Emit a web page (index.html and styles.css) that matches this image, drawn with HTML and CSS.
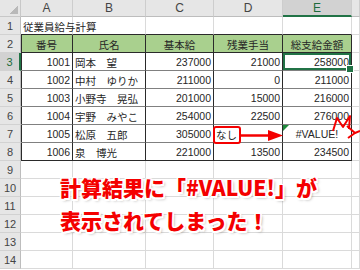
FILE: index.html
```html
<!DOCTYPE html>
<html lang="ja">
<head>
<meta charset="utf-8">
<link rel="stylesheet" href="styles.css">
</head>
<body>
<div class="page">
  <div class="sheet">
    <div class="corner"></div>
    <div class="ch">A</div><div class="ch">B</div><div class="ch">C</div><div class="ch">D</div><div class="ch sel">E</div><div class="ch"></div>

    <div class="rh">1</div>
    <div class="c top title">従業員給与計算</div><div class="c top"></div><div class="c top"></div><div class="c top"></div><div class="c top"></div><div class="c"></div>

    <div class="rh">2</div>
    <div class="c t hd first">番号</div><div class="c t hd">氏名</div><div class="c t hd">基本給</div><div class="c t hd">残業手当</div><div class="c t hd">総支給金額</div><div class="c"></div>

    <div class="rh sel">3</div>
    <div class="c t first num">1001</div><div class="c t txt">岡本　望</div><div class="c t num">237000</div><div class="c t num">21000</div><div class="c t num active">258000</div><div class="c"></div>

    <div class="rh">4</div>
    <div class="c t first num">1002</div><div class="c t txt">中村　ゆりか</div><div class="c t num">211000</div><div class="c t num">0</div><div class="c t num">211000</div><div class="c"></div>

    <div class="rh">5</div>
    <div class="c t first num">1003</div><div class="c t txt">小野寺　晃弘</div><div class="c t num">201000</div><div class="c t num">15000</div><div class="c t num">216000</div><div class="c"></div>

    <div class="rh">6</div>
    <div class="c t first num">1004</div><div class="c t txt">宇野　みやこ</div><div class="c t num">254000</div><div class="c t num">22500</div><div class="c t num">276000</div><div class="c"></div>

    <div class="rh">7</div>
    <div class="c t first num">1005</div><div class="c t txt">松原　五郎</div><div class="c t num">305000</div><div class="c t txt">なし</div><div class="c t err">#VALUE!</div><div class="c"></div>

    <div class="rh">8</div>
    <div class="c t last first num">1006</div><div class="c t last txt">泉　博光</div><div class="c t last num">221000</div><div class="c t last num">13500</div><div class="c t last num">234500</div><div class="c"></div>

    <div class="rh">9</div><div class="c"></div><div class="c"></div><div class="c"></div><div class="c"></div><div class="c"></div><div class="c"></div>
    <div class="rh">10</div><div class="c"></div><div class="c"></div><div class="c"></div><div class="c"></div><div class="c"></div><div class="c"></div>
    <div class="rh">11</div><div class="c"></div><div class="c"></div><div class="c"></div><div class="c"></div><div class="c"></div><div class="c"></div>
    <div class="rh">12</div><div class="c"></div><div class="c"></div><div class="c"></div><div class="c"></div><div class="c"></div><div class="c"></div>
    <div class="rh">13</div><div class="c"></div><div class="c"></div><div class="c"></div><div class="c"></div><div class="c"></div><div class="c"></div>
    <div class="rh">14</div><div class="c"></div><div class="c"></div><div class="c"></div><div class="c"></div><div class="c"></div><div class="c"></div>
  </div>

  <svg class="marks" width="360" height="270" viewBox="0 0 360 270">
    <rect x="214" y="127" width="26" height="16" rx="2" fill="none" stroke="#f40000" stroke-width="2"/>
    <line x1="240" y1="135.5" x2="270" y2="135.5" stroke="#f40000" stroke-width="2.5"/>
    <polygon points="268,130 283,135.5 268,141" fill="#f40000"/>
    <polyline points="333,131 337,118 343,127 350,116 349,129" fill="none" stroke="#f40000" stroke-width="2" stroke-linejoin="round"/>
    <polyline points="347,126 355,133 348,138" fill="none" stroke="#f40000" stroke-width="2" stroke-linejoin="round"/>
    <line x1="355" y1="133" x2="360" y2="131" stroke="#f40000" stroke-width="2"/>
  </svg>

  <div class="callout">計算結果に「#VALUE!」が<br>表示されてしまった！</div>
</div>
</body>
</html>
```

FILE: styles.css
```css
* { box-sizing: border-box; }
html, body { margin: 0; padding: 0; background: #fff; }
.page {
  position: relative;
  width: 360px;
  height: 270px;
  overflow: hidden;
  font-family: "Liberation Sans", "Noto Sans CJK JP", sans-serif;
  font-size: 10.5px;
  color: #262626;
}
.sheet {
  display: grid;
  grid-template-columns: 21px 52px 73px 68px 69px 69px 8px;
  grid-template-rows: 17px repeat(14, 18px);
}
.sheet > div {
  display: flex;
  align-items: center;
  white-space: nowrap;
  overflow: hidden;
}
.corner {
  border-right: 1px solid #c8c8c8;
  border-bottom: 1px solid #c8c8c8;
  background: linear-gradient(135deg, #e6e6e6 55%, #b9b9b9 55%) no-repeat right 2px bottom 2px / 9px 9px, #e6e6e6;
}
.ch {
  justify-content: center;
  background: #e6e6e6;
  color: #444;
  font-size: 12px;
  border-right: 1px solid #cdcdcd;
  border-bottom: 1px solid #bdbdbd;
}
.ch.sel {
  background: #d2d2d2;
  color: #1e6b3c;
  border-bottom: 2px solid #217346;
}
.rh {
  justify-content: center;
  background: #e6e6e6;
  color: #444;
  font-size: 11px;
  border-right: 1px solid #bdbdbd;
  border-bottom: 1px solid #d2d2d2;
}
.rh.sel {
  background: #d2d2d2;
  color: #1e6b3c;
  border-right: 2px solid #217346;
}
.c {
  border-right: 1px solid #dadada;
  border-bottom: 1px solid #dadada;
  padding: 1px 2px 0;
}
.c.top { border-bottom-color: #2a2a2a; }
.sheet > .title { overflow: visible; }
.t {
  border-right-color: #2a2a2a;
  border-bottom-color: #808080;
}
.t.first { box-shadow: inset 1px 0 #2a2a2a; }
.hd {
  justify-content: center;
  background: #a9d08e;
  border-bottom-color: #2a2a2a;
}
.t.last { border-bottom-color: #2a2a2a; }
.num { justify-content: flex-end; }
.txt { justify-content: flex-start; }
.err {
  justify-content: center;
  position: relative;
}
.err::before {
  content: "";
  position: absolute;
  left: 0;
  top: 0;
  border-top: 6px solid #1f8a3c;
  border-right: 6px solid transparent;
}
.sheet > .active {
  position: relative;
  overflow: visible;
  z-index: 2;
  box-shadow: inset 0 0 0 2px #217346;
}
.active::after {
  content: "";
  position: absolute;
  right: -3px;
  bottom: -3px;
  width: 6px;
  height: 6px;
  background: #217346;
  border: 1px solid #fff;
}
.marks {
  position: absolute;
  left: 0;
  top: 0;
  pointer-events: none;
}
.callout {
  position: absolute;
  left: 60px;
  top: 171px;
  font-family: "Noto Sans CJK JP", sans-serif;
  font-weight: 900;
  font-size: 21px;
  line-height: 33px;
  color: #f40000;
  white-space: nowrap;
  text-shadow:
    1.5px 0 0 #fff, -1.5px 0 0 #fff, 0 1.5px 0 #fff, 0 -1.5px 0 #fff,
    1.5px 1.5px 0 #fff, -1.5px -1.5px 0 #fff, 1.5px -1.5px 0 #fff, -1.5px 1.5px 0 #fff,
    2px 2px 3px rgba(0, 0, 0, 0.35);
}
```
